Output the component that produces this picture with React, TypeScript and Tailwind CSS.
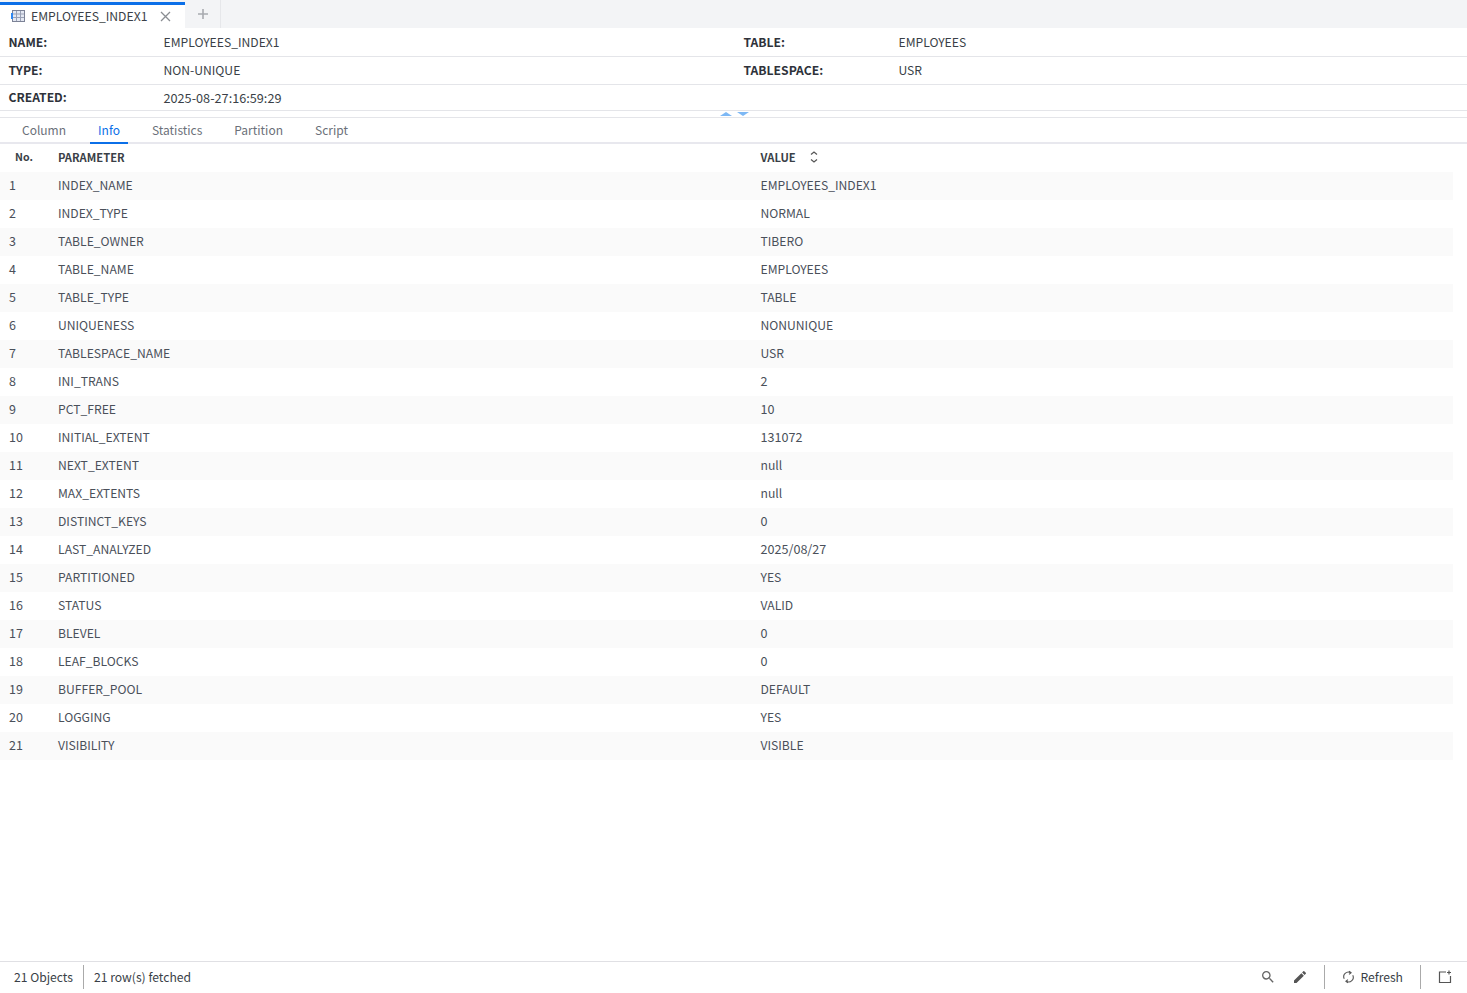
import { MdSearch, MdEdit } from 'react-icons/md';

const FONT = "font-['Noto_Sans_CJK_KR','Noto_Sans',sans-serif]";

const ROWS: [string, string][] = [
  ['INDEX_NAME', 'EMPLOYEES_INDEX1'],
  ['INDEX_TYPE', 'NORMAL'],
  ['TABLE_OWNER', 'TIBERO'],
  ['TABLE_NAME', 'EMPLOYEES'],
  ['TABLE_TYPE', 'TABLE'],
  ['UNIQUENESS', 'NONUNIQUE'],
  ['TABLESPACE_NAME', 'USR'],
  ['INI_TRANS', '2'],
  ['PCT_FREE', '10'],
  ['INITIAL_EXTENT', '131072'],
  ['NEXT_EXTENT', 'null'],
  ['MAX_EXTENTS', 'null'],
  ['DISTINCT_KEYS', '0'],
  ['LAST_ANALYZED', '2025/08/27'],
  ['PARTITIONED', 'YES'],
  ['STATUS', 'VALID'],
  ['BLEVEL', '0'],
  ['LEAF_BLOCKS', '0'],
  ['BUFFER_POOL', 'DEFAULT'],
  ['LOGGING', 'YES'],
  ['VISIBILITY', 'VISIBLE'],
];

const TABS = ['Column', 'Info', 'Statistics', 'Partition', 'Script'];

function TableIcon() {
  return (
    <svg width="14" height="12" viewBox="0 0 14 12" className="shrink-0">
      <rect x="1.5" y="0.5" width="12" height="11" fill="#e4e8f2" stroke="#7c8296" />
      <path d="M5.5 1v10M9.5 1v10M2 4h11M2 7.5h11" stroke="#9aa1b5" strokeWidth="1" fill="none" />
      <rect x="0" y="3" width="2" height="6" fill="#2f86f0" />
    </svg>
  );
}

function SyncIcon() {
  return (
    <svg width="13" height="14" viewBox="0 0 14 14" fill="none" stroke="#555" strokeWidth="1.2" className="ml-[17px] mr-[5px]">
      <path d="M9.3 2.4A5 5 0 0 0 2.4 9" />
      <path d="M4.7 11.6A5 5 0 0 0 11.6 5" />
      <path d="M7.6 0.6l2.2 1.8-2.2 1.8M6.4 9.8l-2.2 1.8 2.2 1.8" />
    </svg>
  );
}

function Meta({ label, value, digits }: { label: string; value: string; digits?: boolean }) {
  return (
    <div className={`flex w-[735px] shrink-0 pl-[8.5px] ${digits ? 'pt-[1px]' : 'pb-[1px]'}`}>
      <span className="w-[155px] font-bold text-[#2e323a]">{label}</span>
      <span className={digits ? 'text-[12.7px] text-[#3a3f47]' : 'text-[#3a3f47]'}>{value}</span>
    </div>
  );
}

export default function App() {
  return (
    <div className={`${FONT} flex h-[993px] w-[1467px] flex-col overflow-hidden bg-white text-[12.15px] text-[#4a505a]`}>
      <div className="flex h-[29px] shrink-0 border-b border-white bg-[#f3f4f6]">
        <div className="mt-[2px] flex w-[185px] items-center border-t-[3px] border-[#0b6fe8] bg-white pb-[1px] pl-[11px] text-[#3a3f47]">
          <TableIcon />
          <span className="ml-[6px] text-[12.2px]">EMPLOYEES_INDEX1</span>
          <svg width="11" height="11" viewBox="0 0 11 11" stroke="#8a8d92" strokeWidth="1.3" className="ml-[13px]">
            <path d="M1 1l9 9M10 1l-9 9" />
          </svg>
        </div>
        <div className="flex w-[36px] items-center justify-center border-r border-[#e6e7ea]">
          <svg width="10" height="10" viewBox="0 0 10 10" stroke="#a8abb0" strokeWidth="1.6">
            <path d="M5 0v10M0 5h10" />
          </svg>
        </div>
      </div>

      <div className="flex h-[28px] shrink-0 items-center border-b border-[#e4e5e9]">
        <Meta label="NAME:" value="EMPLOYEES_INDEX1" />
        <Meta label="TABLE:" value="EMPLOYEES" />
      </div>
      <div className="flex h-[28px] shrink-0 items-center border-b border-[#e4e5e9]">
        <Meta label="TYPE:" value="NON-UNIQUE" />
        <Meta label="TABLESPACE:" value="USR" />
      </div>
      <div className="flex h-[26px] shrink-0 items-center border-b border-[#e4e5e9]">
        <Meta label="CREATED:" value="2025-08-27:16:59:29" digits />
      </div>

      <div className="relative h-[7px] shrink-0 border-b border-[#e4e5e9]">
        <div className="absolute left-[720px] top-[1px] flex gap-[5px]">
          <div className="h-0 w-0 border-x-[6px] border-b-[4px] border-x-transparent border-b-[#7db8f5]" />
          <div className="h-0 w-0 border-x-[6px] border-t-[4px] border-x-transparent border-t-[#7db8f5]" />
        </div>
      </div>

      <div className="flex h-[26px] shrink-0 border-b-2 border-[#e8e8ee] pl-[14px] text-[12px]">
        {TABS.map((t) => (
          <div
            key={t}
            className={`-mb-[2px] mr-[16px] flex h-[26px] items-center border-b-2 px-[8px] ${t === 'Info' ? 'border-[#0b6fe8] text-[#0b6fe8]' : 'border-transparent text-[#6b7079]'}`}
          >
            {t}
          </div>
        ))}
      </div>

      <div className="flex h-[28px] shrink-0 items-center pb-[2px] text-[11.2px] font-bold text-[#3a3f47]">
        <span className="w-[58px] pl-[15px] text-[10.6px]">No.</span>
        <span className="w-[702.5px]">PARAMETER</span>
        <span>VALUE</span>
        <svg width="8" height="12" viewBox="0 0 8 12" fill="none" stroke="#555" strokeWidth="1.2" className="ml-[14px]">
          <path d="M1 3.5L4 1l3 2.5M1 8.5L4 11l3-2.5" />
        </svg>
      </div>

      <div className="w-[1453px] shrink-0">
        {ROWS.map(([p, v], i) => (
          <div key={p} className={`flex h-[28px] items-center pb-[2px] ${i % 2 === 0 ? 'bg-[#fafafa]' : 'bg-white'}`}>
            <span className="w-[58px] pl-[9px] text-[12.5px]">{i + 1}</span>
            <span className="w-[702.5px]">{p}</span>
            <span className={/^[\d/]+$/.test(v) ? 'text-[12.6px]' : ''}>{v}</span>
          </div>
        ))}
      </div>

      <div className="flex-1" />

      <div className="flex h-[32px] shrink-0 items-center border-t border-[#e0e0e4] pb-[1px] text-[#3a3f47]">
        <span className="pl-[14px] pr-[10px]">21 Objects</span>
        <span className="h-[24px] w-px bg-[#aaa]" />
        <span className="pl-[10px]">21 row(s) fetched</span>
        <div className="ml-auto flex items-center">
          <MdSearch size={16} className="mr-[16px] text-[#666]" />
          <MdEdit size={16} className="mr-[16px] text-[#555]" />
          <span className="h-[24px] w-px bg-[#aaa]" />
          <SyncIcon />
          <span>Refresh</span>
          <span className="ml-[17px] h-[24px] w-px bg-[#aaa]" />
          <svg width="14" height="14" viewBox="0 0 14 14" fill="none" stroke="#555" strokeWidth="1.2" className="ml-[17px] mr-[15px]">
            <path d="M8 2H1.5v10.5H12.5V6M11 0.5v4M9 2.5h4" />
          </svg>
        </div>
      </div>
    </div>
  );
}
